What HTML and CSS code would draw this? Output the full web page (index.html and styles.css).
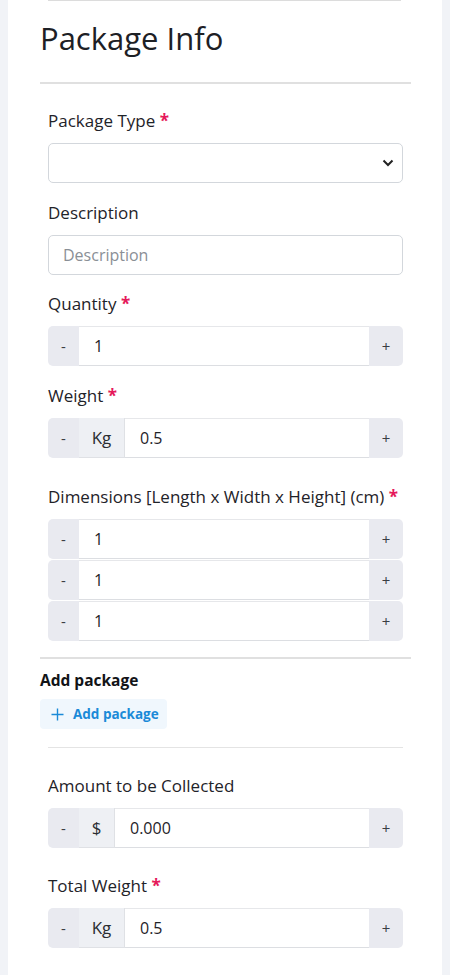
FILE: index.html
```html
<!DOCTYPE html>
<html>
<head>
<meta charset="utf-8">
<link rel="stylesheet" href="styles.css">
</head>
<body>
<div class="card">
  <div class="topline"></div>
  <h1 class="title">Package Info</h1>
  <hr class="rule">
  <div class="fields">
    <div class="field">
      <label class="label">Package Type <span class="req">*</span></label>
      <div class="select"><svg class="chev" width="12" height="8" viewBox="0 0 12 8"><path d="M1.5 1.5 L6 6 L10.5 1.5" fill="none" stroke="#222" stroke-width="2"/></svg></div>
    </div>
    <div class="field">
      <label class="label">Description</label>
      <div class="text-input placeholder">Description</div>
    </div>
    <div class="field">
      <label class="label">Quantity <span class="req">*</span></label>
      <div class="group"><span class="btn minus">-</span><span class="value">1</span><span class="btn plus">+</span></div>
    </div>
    <div class="field">
      <label class="label">Weight <span class="req">*</span></label>
      <div class="group"><span class="btn minus">-</span><span class="addon kg">Kg</span><span class="value">0.5</span><span class="btn plus">+</span></div>
    </div>
    <div class="field field-last">
      <label class="label">Dimensions [Length x Width x Height] (cm) <span class="req">*</span></label>
      <div class="stack">
        <div class="group"><span class="btn minus">-</span><span class="value">1</span><span class="btn plus">+</span></div>
        <div class="group"><span class="btn minus">-</span><span class="value">1</span><span class="btn plus">+</span></div>
        <div class="group"><span class="btn minus">-</span><span class="value">1</span><span class="btn plus">+</span></div>
      </div>
    </div>
  </div>
  <hr class="rule rule-mid">
  <div class="add-title">Add package</div>
  <button class="add-btn"><svg width="13" height="13" viewBox="0 0 13 13"><path d="M6.5 0.5 V12.5 M0.5 6.5 H12.5" stroke="#1a8ad8" stroke-width="1.4"/></svg><span>Add package</span></button>
  <div class="fields">
    <hr class="rule rule-inner">
    <div class="field field-amt">
      <label class="label">Amount to be Collected</label>
      <div class="group"><span class="btn minus">-</span><span class="addon dollar">$</span><span class="value">0.000</span><span class="btn plus">+</span></div>
    </div>
    <div class="field field-total">
      <label class="label">Total Weight <span class="req">*</span></label>
      <div class="group"><span class="btn minus">-</span><span class="addon kg">Kg</span><span class="value">0.5</span><span class="btn plus">+</span></div>
    </div>
  </div>
</div>
</body>
</html>
```
FILE: styles.css
```css
html, body {
  margin: 0;
  padding: 0;
}
body {
  background: #f1f3f7;
  font-family: "Open Sans", "Noto Sans", sans-serif;
  color: #1f2329;
}
.card {
  margin: 0 8px;
  background: #fff;
  padding: 0 31px 40px 32px;
  min-height: 975px;
  box-sizing: border-box;
}
.topline {
  margin: 0 10px 0 8px;
  border-top: 1px solid #dcdcdc;
}
.title {
  margin: 18px 0 0;
  font-size: 31px;
  font-weight: 400;
  line-height: 38px;
  color: #1d2025;
}
.rule {
  border: 0;
  border-top: 2px solid #e0e0e0;
  margin: 25px 0 0;
  height: 0;
}
.fields {
  padding: 0 8px;
}
.field {
  margin-top: 25px;
}
.field + .field {
  margin-top: 17.7px;
}
.fields .field.field-last {
  margin-top: 27px;
}
.label {
  display: block;
  font-size: 17px;
  line-height: 24px;
  color: #1f2329;
  margin-bottom: 10px;
}
.req {
  color: #e5195a;
  font-weight: 700;
}
.select {
  height: 40px;
  border: 1px solid #d3d7dc;
  border-radius: 5px;
  box-sizing: border-box;
  display: flex;
  align-items: center;
  justify-content: flex-end;
  padding-right: 8px;
}
.text-input {
  height: 40px;
  border: 1px solid #d3d7dc;
  border-radius: 5px;
  box-sizing: border-box;
  display: flex;
  align-items: center;
  padding-left: 14px;
  font-size: 16px;
}
.placeholder {
  color: #8a8f96;
}
.group {
  display: flex;
  height: 40px;
  font-size: 16px;
}
.stack .group + .group {
  margin-top: 1px;
}
.btn {
  background: #e9eaf0;
  display: flex;
  align-items: center;
  justify-content: center;
  color: #3a3d42;
  font-size: 15px;
}
.minus {
  width: 31px;
  border-radius: 5px 0 0 5px;
}
.plus {
  width: 34px;
  border-radius: 0 5px 5px 0;
}
.addon {
  background: #eef0f4;
  display: flex;
  align-items: center;
  justify-content: center;
  border-bottom: 1px solid #dfe1e5;
  border-right: 1px solid #dfe1e5;
  box-sizing: border-box;
  font-size: 17px;
  color: #2a2d32;
}
.kg {
  width: 46px;
}
.dollar {
  width: 36px;
}
.value {
  flex: 1;
  display: flex;
  align-items: center;
  padding-left: 15px;
  border-top: 1px solid #e6e7ea;
  border-bottom: 1px solid #dcdee2;
  box-sizing: border-box;
  font-size: 16px;
  color: #1f2329;
}
.rule-mid {
  margin-top: 16px;
}
.add-title {
  margin-top: 10px;
  font-size: 15.5px;
  font-weight: 700;
  line-height: 22px;
  color: #121417;
}
.add-btn {
  margin-top: 8px;
  height: 30px;
  padding: 0 8px 0 11px;
  border: 0;
  border-radius: 4px;
  background: #f0f7fd;
  display: flex;
  align-items: center;
  gap: 9px;
  font-family: inherit;
  font-size: 13.5px;
  font-weight: 700;
  color: #1a8ad8;
}
.rule-inner {
  border-top: 1px solid #e4e4e4;
  margin: 18px 0 0;
}
.fields .field.field-amt {
  margin-top: 26px;
}
.fields .field.field-total {
  margin-top: 26px;
}
```
